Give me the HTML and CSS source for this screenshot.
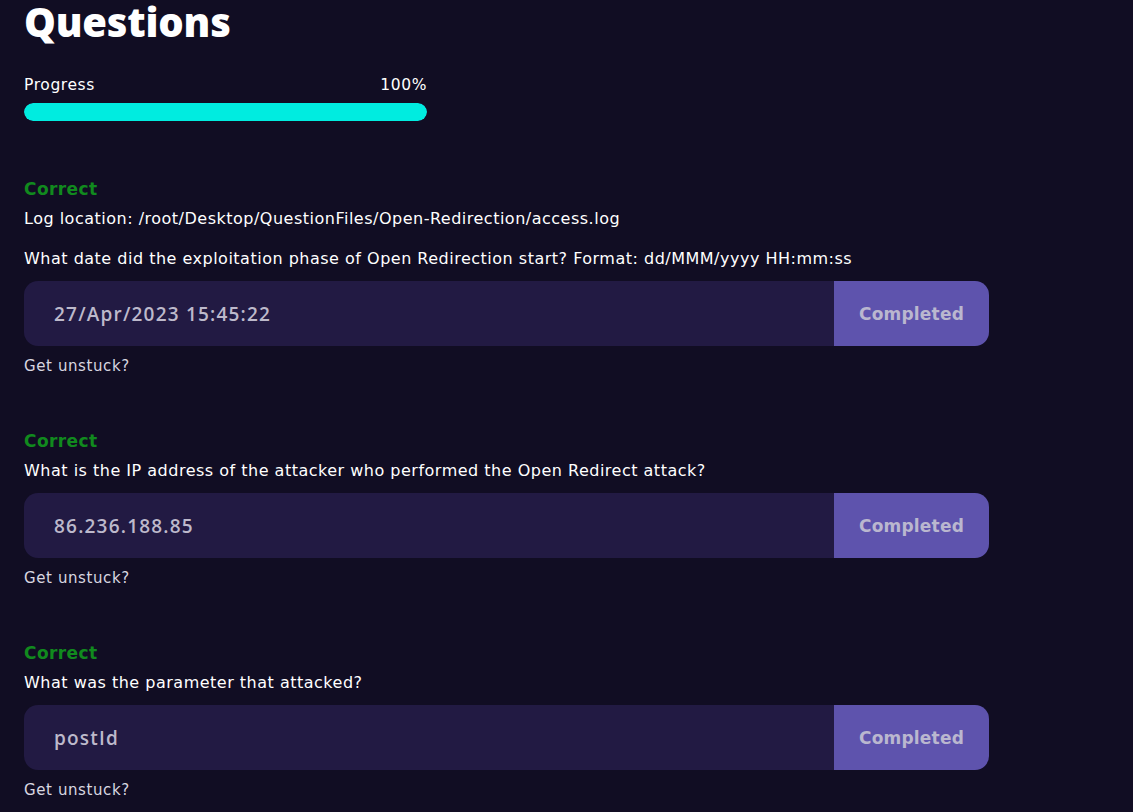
FILE: index.html
```html
<!DOCTYPE html>
<html lang="en">
<head>
<meta charset="utf-8">
<title>Questions</title>
<link rel="stylesheet" href="styles.css">
</head>
<body>
<main class="page">
  <h1 class="title">Questions</h1>
  <section class="progress">
    <div class="progress-head"><span>Progress</span><span>100%</span></div>
    <div class="progress-track"><div class="progress-fill" style="width:100%"></div></div>
  </section>

  <section class="question">
    <div class="status">Correct</div>
    <p class="q-text">Log location: /root/Desktop/QuestionFiles/Open-Redirection/access.log</p>
    <p class="q-text q-gap">What date did the exploitation phase of Open Redirection start? Format: dd/MMM/yyyy HH:mm:ss</p>
    <div class="answer-row">
      <div class="answer">27/Apr/2023 15:45:22</div>
      <button class="btn">Completed</button>
    </div>
    <a class="hint">Get unstuck?</a>
  </section>

  <section class="question">
    <div class="status">Correct</div>
    <p class="q-text">What is the IP address of the attacker who performed the Open Redirect attack?</p>
    <div class="answer-row">
      <div class="answer">86.236.188.85</div>
      <button class="btn">Completed</button>
    </div>
    <a class="hint">Get unstuck?</a>
  </section>

  <section class="question">
    <div class="status">Correct</div>
    <p class="q-text">What was the parameter that attacked?</p>
    <div class="answer-row">
      <div class="answer">postId</div>
      <button class="btn">Completed</button>
    </div>
    <a class="hint">Get unstuck?</a>
  </section>
</main>
</body>
</html>
```
FILE: styles.css
```css
html, body {
  margin: 0;
  padding: 0;
  background: #110d23;
}
body {
  font-family: "DejaVu Sans", "Noto Sans", sans-serif;
  color: #ffffff;
}
.page {
  padding: 0 24px;
}
.title {
  margin: 0;
  font-family: "Open Sans", sans-serif;
  font-size: 40px;
  font-weight: 800;
  line-height: 44px;
  letter-spacing: -0.2px;
}
.progress {
  width: 403px;
  margin-top: 31px;
}
.progress-head {
  display: flex;
  justify-content: space-between;
  font-size: 15.5px;
  line-height: 20px;
  letter-spacing: 0.6px;
}
.progress-track {
  margin-top: 8px;
  height: 18px;
  border-radius: 9px;
  background: #2b2450;
  overflow: hidden;
}
.progress-fill {
  height: 100%;
  border-radius: 9px;
  background: #00ece0;
}
.question {
  margin-top: 57px;
  display: flex;
  flex-direction: column;
}
.question + .question {
  margin-top: 54px;
}
.status {
  color: #118a1e;
  font-weight: 700;
  font-size: 17px;
  line-height: 22px;
  letter-spacing: 0.4px;
}
.q-text {
  margin: 9px 0 0;
  font-size: 16px;
  line-height: 20px;
  letter-spacing: 0.5px;
}
.q-gap {
  margin-top: 20px;
}
.answer-row {
  margin-top: 12px;
  width: 965px;
  height: 65px;
  display: flex;
  border-radius: 14px;
  overflow: hidden;
}
.answer {
  flex: 1;
  background: #221a43;
  color: #bdb9cb;
  font-family: "Open Sans", sans-serif;
  font-size: 19px;
  font-weight: 600;
  letter-spacing: 1.2px;
  padding-left: 30px;
  display: flex;
  align-items: center;
}
.btn {
  width: 155px;
  border: 0;
  background: #5e53ad;
  color: #bab7cf;
  font-family: inherit;
  font-size: 17px;
  font-weight: 700;
  letter-spacing: 0.2px;
}
.hint {
  margin-top: 10px;
  font-size: 15px;
  line-height: 20px;
  letter-spacing: 0.6px;
  color: #d9d7e0;
}
```
